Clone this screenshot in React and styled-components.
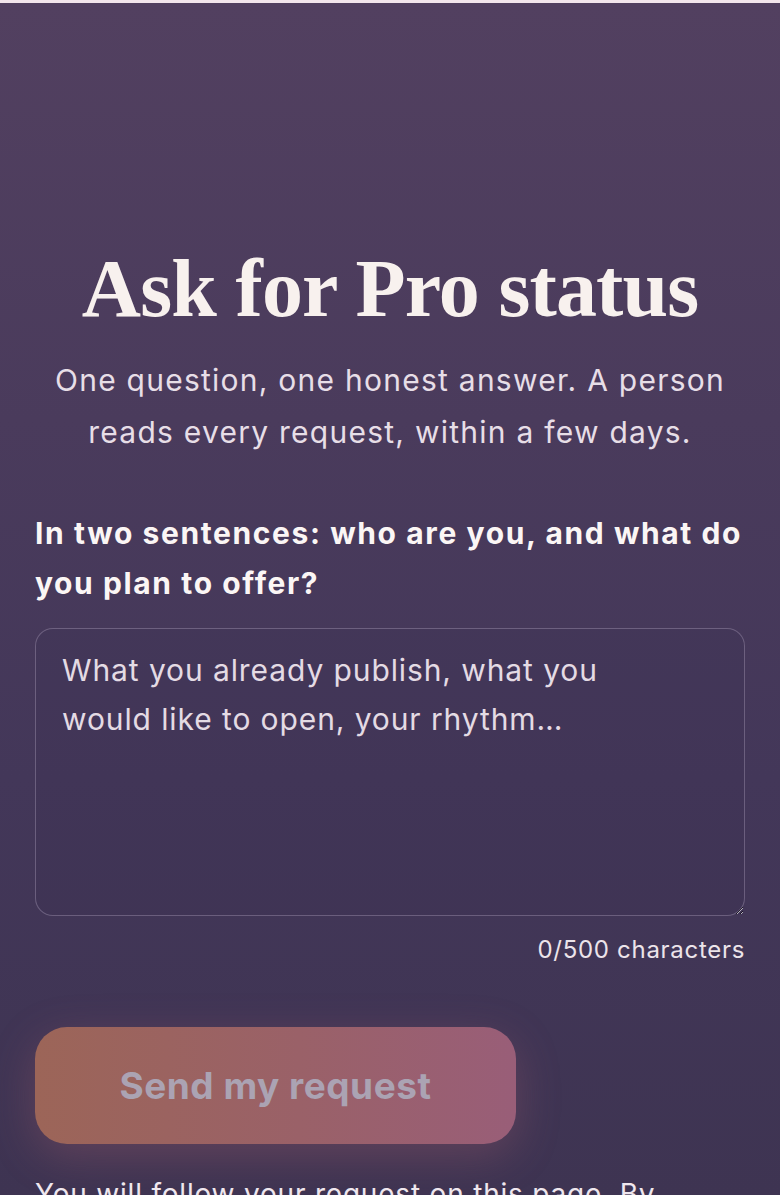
import React, { useState } from "react";
import styled, { createGlobalStyle } from "styled-components";

const GlobalStyle = createGlobalStyle`
    * { box-sizing: border-box; }
    html, body {
        margin: 0;
        padding: 0;
    }
    body {
        background: #f3e6ec;
        font-family: "Inter", "DejaVu Sans", sans-serif;
    }
`;

function App() {
    const [text, setText] = useState("");

    return (
        <>
            <GlobalStyle />
            <Page>
                <Wrapper>
                    <Title>Ask for Pro status</Title>
                    <Lead>
                        One question, one honest answer. A person reads every request, within a few days.
                    </Lead>
                    <Form onSubmit={(e) => e.preventDefault()}>
                        <Label htmlFor="pitch">
                            In two sentences: who are you, and what do you plan to offer?
                        </Label>
                        <TextArea
                            id="pitch"
                            value={text}
                            maxLength={500}
                            onChange={(e) => setText(e.target.value)}
                            placeholder="What you already publish, what you would like to open, your rhythm…"
                        />
                        <Counter>{text.length}/500 characters</Counter>
                        <SendButton type="submit" disabled={text.length === 0}>
                            Send my request
                        </SendButton>
                        <Note>
                            You will follow your request on this page. By sending it, you agree to be contacted by our team.
                        </Note>
                    </Form>
                </Wrapper>
            </Page>
        </>
    );
}

const Page = styled.main`
    margin-top: 3px;
    height: 1192px;
    overflow: hidden;
    background: linear-gradient(180deg, #524060 0%, #4a3b5c 35%, #433759 65%, #3e3452 100%);
    color: #f7f0ee;
`;

const Wrapper = styled.div`
    padding: 242px 35px 0;
    display: flex;
    flex-direction: column;
`;

const Title = styled.h1`
    margin: 0;
    text-align: center;
    font-family: "Liberation Serif", "DejaVu Serif", serif;
    font-weight: 700;
    font-size: 82px;
    line-height: 88px;
    letter-spacing: -0.9px;
    color: #f8f1ee;
`;

const Lead = styled.p`
    margin: 21px auto 0;
    max-width: 700px;
    text-align: center;
    font-size: 30px;
    line-height: 52px;
    font-weight: 400;
    letter-spacing: 1.25px;
    color: #e7dee7;
`;

const Form = styled.form`
    margin-top: 50px;
    display: flex;
    flex-direction: column;
`;

const Label = styled.label`
    font-size: 30px;
    line-height: 50px;
    font-weight: 700;
    letter-spacing: 1.6px;
    color: #fbf6f5;
`;

const TextArea = styled.textarea`
    margin-top: 20px;
    width: 100%;
    height: 288px;
    padding: 17px 64px 17px 26px;
    border: 1.5px solid rgba(220, 205, 230, 0.28);
    border-radius: 18px;
    background: rgba(40, 30, 60, 0.06);
    color: #f3ecf1;
    font-family: "Inter", "DejaVu Sans", sans-serif;
    font-size: 30px;
    line-height: 49px;
    letter-spacing: 0.9px;
    outline: none;
    resize: vertical;

    &::placeholder {
        color: #e4dbe4;
        opacity: 1;
    }
`;

const Counter = styled.div`
    margin-top: 18px;
    text-align: right;
    font-size: 24px;
    line-height: 32px;
    letter-spacing: 0.7px;
    color: #ece4ea;
`;

const SendButton = styled.button`
    margin-top: 61px;
    width: 481px;
    height: 117px;
    border: none;
    border-radius: 32px;
    background: linear-gradient(90deg, #9c6558 0%, #9a6168 55%, #995e78 100%);
    box-shadow: 0 12px 44px rgba(170, 95, 110, 0.32);
    color: #aba3b3;
    font-family: "Inter", "DejaVu Sans", sans-serif;
    font-size: 37px;
    font-weight: 700;
    letter-spacing: 0.5px;
    cursor: pointer;

    &:disabled {
        cursor: default;
    }
`;

const Note = styled.p`
    margin: 28px 0 0;
    font-size: 28px;
    line-height: 44px;
    letter-spacing: 0.8px;
    color: #efe7ee;
`;

export default App;
